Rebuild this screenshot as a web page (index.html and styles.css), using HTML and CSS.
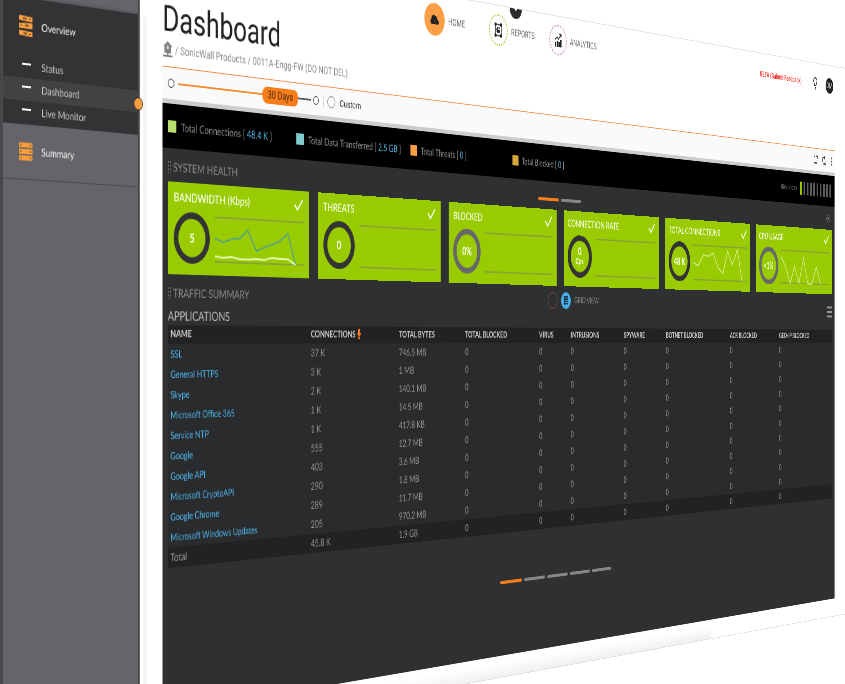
FILE: index.html
```html
<!DOCTYPE html>
<html lang="en">
<head>
<meta charset="utf-8">
<title>Dashboard</title>
<link rel="stylesheet" href="styles.css">
</head>
<body>
<div class="stage">
<div class="app">
  <aside class="sidebar">
    <nav class="side-group side-group-active">
      <a class="side-title" href="#overview">
        <svg class="stack" viewBox="0 0 18 21"><g fill="#fa9f3f"><path d="M1 0l16 1q1 0 1 1v3q0 1-1 1L1 5Q0 5 0 4V1q0-1 1-1z"/><path d="M1 8l16-1q1 0 1 1v4q0 1-1 1L1 13Q0 13 0 12V9q0-1 1-1z"/><path d="M1 15l16 1q1 0 1 1v3q0 1-1 1L1 20Q0 20 0 19v-3q0-1 1-1z"/></g><path d="M5 3h5M8 10h5M6 18h5" stroke="#5d4222" stroke-width="1.500"/><path d="M13 3h3M2 10h2M13 18.500h3" stroke="#5d4222"/></svg>
        Overview
      </a>
      <a class="side-item" href="#status">Status</a>
      <a class="side-item side-item-current" href="#dashboard">Dashboard</a>
      <a class="side-item" href="#monitor">Live Monitor</a>
    </nav>
    <nav class="side-group side-group-summary">
      <a class="side-title" href="#summary">
        <svg class="stack" viewBox="0 0 18 18"><g fill="#fa9f3f"><rect width="18" height="5" rx="1"/><rect y="6.500" width="18" height="5" rx="1"/><rect y="13" width="18" height="5" rx="1"/></g><path d="M1.500 2.500h2M1.500 9h2M1.500 15.500h2M14 2.500h2.500M14 9h2.500M14 15.500h2.500" stroke="#5d4222"/></svg>
        Summary
      </a>
    </nav>
    <button class="handle" aria-label="Collapse menu"></button>
  </aside>

  <main class="main">
    <header class="topbar">
      <nav class="tabs">
        <a class="tab" href="#home"><span class="tab-icon tab-home"><svg viewBox="0 0 20 16" width="20" height="16"><path d="M4 14a4 4 0 0 1 0-7 4 4 0 0 1 7-3 3 3 0 0 1 4 3l2 2a3 3 0 0 1 0 5z" fill="#222"/><path d="M9 9l4 4" stroke="#8a5a28"/></svg></span>HOME</a>
        <a class="tab" href="#reports"><span class="tab-icon tab-reports"><svg viewBox="0 0 20 20" width="20" height="20"><path d="M4 3h12v14H4z" fill="none" stroke="#222" stroke-width="1.500"/><path d="M2 1h4v4H2zM14 1h4v4h-4zM2 15h4v4H2zM14 15h4v4h-4z" fill="#222"/><circle cx="10" cy="10" r="4" fill="#222"/><path d="M10 10V7A3 3 0 0 1 13 10z" fill="#fff"/></svg></span>REPORTS</a>
        <a class="tab" href="#analytics"><span class="tab-icon tab-analytics"><svg viewBox="0 0 20 20" width="20" height="20"><path d="M3 19v-6h3v6zM7 19v-8h3v8zM11 19v-7h3v7zM15 19V9h3v10z" fill="#222"/><path d="M3 10l5-4 3 3 6-7M13 2h4v4" fill="none" stroke="#222" stroke-width="1.500"/></svg></span>ANALYTICS</a>
      </nav>
      <div class="account">
        <a class="beta" href="#feedback">BETA (Submit Feedback)</a>
        <svg viewBox="0 0 12 20" width="12" height="20" fill="none" stroke="#333" stroke-width="2"><path d="M4 13c0-3-3-3-3-7a5 5 0 0 1 10 0c0 4-3 4-3 7zM4 16h4M5 18.500h2"/></svg>
        <button class="avatar">DM</button>
      </div>
    </header>

    <h1 class="title">Dashboard</h1>
    <nav class="crumbs">
      <svg viewBox="0 0 16 18" width="16" height="18"><path d="M8 0l7 6h-2v7H9v2h6v2H1v-2h6v-2H3V6H1z" fill="#808080"/><path d="M8 4v5M6 7h4" stroke="#fff"/></svg>
      <span>/</span><a href="#products">SonicWall Products</a><span>/</span><a href="#device">0011A-Engg-FW (DO NOT DEL)</a>
    </nav>

    <section class="toolbar">
      <button class="stop" aria-label="Start"></button>
      <span class="track track-on"></span>
      <button class="period">30 Days</button>
      <span class="track"></span>
      <button class="stop" aria-label="End"></button>
      <span class="divider"></span>
      <label class="custom"><input type="radio" name="period">Custom</label>
      <div class="tools">
        <svg viewBox="0 0 14 14" width="14" height="14" fill="none" stroke="#444" stroke-width="2"><path d="M6 2H2v10h9V8M8 1.500h5M12.500 1v4"/></svg>
        <svg viewBox="0 0 14 14" width="14" height="14" fill="none" stroke="#444" stroke-width="2"><path d="M2 9V4q0-2 2-2h5M7 0l2 2-2 2M12 5v5q0 2-2 2H5M7 10l-2 2 2 2"/></svg>
        <svg viewBox="0 0 4 14" width="4" height="14" fill="#555"><circle cx="2" cy="2" r="1.500"/><circle cx="2" cy="7" r="1.500"/><circle cx="2" cy="12" r="1.500"/></svg>
      </div>
    </section>

    <div class="panel">
      <section class="totals">
        <div class="total"><i class="swatch green"></i>Total Connections [ <b>48.4 K</b> ]</div>
        <div class="total"><i class="swatch teal"></i>Total Data Transferred [ <b>2.5 GB</b> ]</div>
        <div class="total"><i class="swatch orange"></i>Total Threats [ <b>0</b> ]</div>
        <div class="total"><i class="swatch gold"></i>Total Blocked [ <b>0</b> ]</div>
        <div class="risk">Risk Index <span class="risk-bars"><i class="on"></i><i></i><i></i><i></i><i></i><i></i><i></i><i></i><i></i><i></i></span></div>
      </section>

      <section class="head health-head">
        <h2><span class="grip"></span>SYSTEM HEALTH</h2>
        <div class="pages"><button class="current" aria-label="Page 1"></button><button aria-label="Page 2"></button></div>
        <button class="expand" aria-label="Expand"></button>
      </section>

      <section class="cards">
        <article class="card">
          <h3>BANDWIDTH (Kbps)</h3><svg class="check" viewBox="0 0 18 16"><path d="M2 8l5 6L16 2"/></svg>
          <div class="ring">5</div>
          <svg class="chart" viewBox="0 0 147 52" preserveAspectRatio="none"><path class="rule" d="M0 1h147M0 50h147"/><path class="under" d="M0 24L13 28L27 24L40 23L53 13L67 36L80 32L93 28L106 24L120 15L133 49"/><path class="dash" d="M0 24L13 28L27 24L40 23L53 13L67 36L80 32L93 28L106 24L120 15L133 49"/><path class="line bold" d="M0 44L13 45L27 44L40 46L53 46L67 45L80 46L93 43L106 44L120 44L133 50"/></svg>
        </article>
        <article class="card">
          <h3>THREATS</h3><svg class="check" viewBox="0 0 18 16"><path d="M2 8l5 6L16 2"/></svg>
          <div class="ring">0</div>
          <svg class="chart" viewBox="0 0 147 52" preserveAspectRatio="none"><path class="rule" d="M0 1h147M0 50h147"/></svg>
        </article>
        <article class="card">
          <h3>BLOCKED</h3><svg class="check" viewBox="0 0 18 16"><path d="M2 8l5 6L16 2"/></svg>
          <div class="ring muted">0%</div>
          <svg class="chart" viewBox="0 0 147 52" preserveAspectRatio="none"><path class="rule" d="M0 1h147M0 50h147"/></svg>
        </article>
        <article class="card">
          <h3>CONNECTION RATE</h3><svg class="check" viewBox="0 0 18 16"><path d="M2 8l5 6L16 2"/></svg>
          <div class="ring">0<small>Cps</small></div>
          <svg class="chart" viewBox="0 0 147 52" preserveAspectRatio="none"><path class="rule" d="M0 1h147M0 50h147"/></svg>
        </article>
        <article class="card">
          <h3>TOTAL CONNECTIONS</h3><svg class="check" viewBox="0 0 18 16"><path d="M2 8l5 6L16 2"/></svg>
          <div class="ring">48 K</div>
          <svg class="chart" viewBox="0 0 147 52" preserveAspectRatio="none"><path class="rule" d="M0 1h147M0 50h147"/><path class="line" d="M0 26L13 30L27 14L40 16L53 11L67 32L80 40L93 7L106 27L120 4L133 50"/></svg>
        </article>
        <article class="card">
          <h3>CPU USAGE</h3><svg class="check" viewBox="0 0 18 16"><path d="M2 8l5 6L16 2"/></svg>
          <div class="ring muted">&lt;1%</div>
          <svg class="chart" viewBox="0 0 147 52" preserveAspectRatio="none"><path class="rule" d="M0 1h147M0 50h147"/><path class="line" d="M0 11L13 25L27 50L40 24L53 50L67 11L80 50L93 50L106 24L120 50"/></svg>
        </article>
      </section>

      <section class="head traffic-head">
        <h2><span class="grip"></span>TRAFFIC SUMMARY</h2>
        <div class="views">
          <button class="view" aria-label="Chart view"></button>
          <button class="view view-current" aria-label="Grid view"><svg viewBox="0 0 14 14" width="14" height="14" fill="none" stroke="#143448" stroke-width="2"><path d="M2 2h10M2 5h10M2 8h10M2 11h10M4 1v12"/></svg></button>
          <span>GRID VIEW</span>
        </div>
        <button class="menu" aria-label="Menu"><i></i><i></i><i></i></button>
      </section>

      <h4 class="caption">APPLICATIONS</h4>
      <table class="grid">
        <colgroup><col class="c-name"><col class="c-conn"><col class="c-bytes"><col class="c-blocked"><col class="c-virus"><col class="c-intr"><col class="c-spy"><col class="c-bot"><col class="c-acr"><col></colgroup>
        <thead><tr><th>NAME</th><th>CONNECTIONS <svg viewBox="0 0 8 12" width="8" height="12"><path d="M2 0h4v5h2L4 10 0 5h2zM2 10h4v2H2z" fill="#f47b20"/></svg></th><th>TOTAL BYTES</th><th>TOTAL BLOCKED</th><th>VIRUS</th><th>INTRUSIONS</th><th>SPYWARE</th><th>BOTNET BLOCKED</th><th>ACR BLOCKED</th><th>GEO-IP BLOCKED</th></tr></thead>
        <tbody>
          <tr><td><a href="#a1">SSL</a></td><td>37 K</td><td>746.5 MB</td><td>0</td><td>0</td><td>0</td><td>0</td><td>0</td><td>0</td><td>0</td></tr>
          <tr><td><a href="#a2">General HTTPS</a></td><td>3 K</td><td>1 MB</td><td>0</td><td>0</td><td>0</td><td>0</td><td>0</td><td>0</td><td>0</td></tr>
          <tr><td><a href="#a3">Skype</a></td><td>2 K</td><td>140.1 MB</td><td>0</td><td>0</td><td>0</td><td>0</td><td>0</td><td>0</td><td>0</td></tr>
          <tr><td><a href="#a4">Microsoft Office 365</a></td><td>1 K</td><td>14.5 MB</td><td>0</td><td>0</td><td>0</td><td>0</td><td>0</td><td>0</td><td>0</td></tr>
          <tr><td><a href="#a5">Service NTP</a></td><td>1 K</td><td>417.8 KB</td><td>0</td><td>0</td><td>0</td><td>0</td><td>0</td><td>0</td><td>0</td></tr>
          <tr><td><a href="#a6">Google</a></td><td>555</td><td>12.7 MB</td><td>0</td><td>0</td><td>0</td><td>0</td><td>0</td><td>0</td><td>0</td></tr>
          <tr><td><a href="#a7">Google API</a></td><td>403</td><td>3.6 MB</td><td>0</td><td>0</td><td>0</td><td>0</td><td>0</td><td>0</td><td>0</td></tr>
          <tr><td><a href="#a8">Microsoft CryptoAPI</a></td><td>290</td><td>1.8 MB</td><td>0</td><td>0</td><td>0</td><td>0</td><td>0</td><td>0</td><td>0</td></tr>
          <tr><td><a href="#a9">Google Chrome</a></td><td>289</td><td>11.7 MB</td><td>0</td><td>0</td><td>0</td><td>0</td><td>0</td><td>0</td><td>0</td></tr>
          <tr><td><a href="#a10">Microsoft Windows Updates</a></td><td>205</td><td>970.2 MB</td><td>0</td><td>0</td><td>0</td><td>0</td><td>0</td><td>0</td><td>0</td></tr>
        </tbody>
        <tfoot><tr><td>Total</td><td>45.8 K</td><td>1.9 GB</td><td>0</td><td>0</td><td>0</td><td>0</td><td>0</td><td>0</td><td>0</td></tr></tfoot>
      </table>
      <div class="pages table-pages"><button class="current" aria-label="Page 1"></button><button aria-label="Page 2"></button><button aria-label="Page 3"></button><button aria-label="Page 4"></button><button aria-label="Page 5"></button></div>
    </div>
  </main>
  <button class="notch" aria-label="Show header"></button>
</div>
</div>
</body>
</html>
```
FILE: styles.css
```css
* { box-sizing: border-box; }
body { margin: 0; background: #fff; font-family: Roboto, "Liberation Sans", sans-serif; font-size: 12px; color: #333; text-rendering: geometricPrecision; }
a { color: inherit; text-decoration: none; }
button { padding: 0; border: 0; background: none; font: inherit; color: inherit; }
h1, h2, h3, h4 { margin: 0; font-weight: 400; }
svg { display: block; flex: none; }

/* The whole application is one plane, turned away from the viewer about its left edge. */
.stage { height: 100vh; overflow: hidden; perspective: 1960px; perspective-origin: 0 340px; }
.app { position: relative; display: flex; width: calc(200vw + 38px); margin-top: -85px; transform: rotateY(40deg); transform-origin: 0 0; background: #fff; box-shadow: 0 0 0 1px #dedede; }

/* Sidebar */
.sidebar { position: relative; flex: none; width: 194px; padding-top: 79px; background: #656569; border: solid #48484a; border-width: 0 3px 0 4px; font-family: Lato, Roboto, sans-serif; font-size: 11px; }
.side-group-active { height: 128px; padding-top: 14px; background: #333335; box-shadow: 0 -2px 2px #57575b; color: #f4f4f4; }
.side-group-summary { height: 56px; padding-top: 13px; border-bottom: 1px solid #4b4b4d; color: #f4f4f4; }
.side-title { display: flex; align-items: center; gap: 12px; height: 28px; padding-left: 21px; }
.stack { width: 18px; height: 21px; }
.side-item { display: flex; align-items: center; gap: 14px; height: 23px; padding-left: 25px; color: #c4c4c4; }
.side-item::before { content: ""; width: 12px; height: 2px; margin-top: -6px; background: #fff; }
.side-title + .side-item { margin-top: 16px; }
.side-item-current { background: #424244; }
.handle { position: absolute; top: 167px; right: -8px; width: 14px; height: 14px; border: 1px solid #222; border-radius: 50%; background: #fa9f3f; }

/* Main column */
.main { flex: 1; min-width: 0; padding: 10px 33px 27px 34px; background: linear-gradient(#f5f5f5, #f5f5f5) 5px 80px / 6px 100% no-repeat, linear-gradient(#fff, #f0f0f0) 0 100% / 1140px 18px no-repeat; }
.topbar { display: flex; align-items: center; justify-content: space-between; height: 41px; padding-left: 449px; }
.tabs { display: flex; gap: 30px; color: #666; }
.tab { display: flex; align-items: center; gap: 7px; min-width: 100px; }
.tab-icon { display: grid; place-items: center; width: 40px; height: 40px; border-radius: 50%; }
.tab-home { background: #fa9f45; }
.tab-reports { border: 2px dotted #a9d03f; }
.tab-analytics { border: 2px dotted #c78fc0; }
.account { display: flex; align-items: center; gap: 36px; }
.beta { color: #f2251d; font-size: 11px; font-weight: 500; }
.avatar { width: 24px; height: 24px; margin: 0 4px 0 -10px; border-radius: 50%; background: #222; color: #ddd; font-size: 12px; }
.notch { position: absolute; top: 0; left: 50%; width: 26px; height: 13px; margin-left: -13px; border-radius: 0 0 13px 13px; background: #2c2c2e; }
.notch::after { content: ""; display: block; width: 0; margin: -8px auto 0; border: 4px solid transparent; border-top-color: #fff; }

.title { height: 51px; padding-top: 9px; color: #232323; font-size: 39px; line-height: 39px; }
.crumbs { display: flex; align-items: center; gap: 3px; height: 28px; padding-bottom: 8px; color: #8b8b8b; font-size: 12px; line-height: 14px; }

.toolbar { display: flex; align-items: center; height: 40px; padding: 0 8px; background: #fafafa; border-top: 1px solid #f68a42; border-bottom: 5px solid #cdcdcd; font-size: 11px; }
.stop { width: 10px; height: 10px; border: 1px solid #333; border-radius: 50%; background: #fff; }
.track { width: 22px; height: 2px; background: #555; }
.track + .stop { margin-left: 4px; }
.track-on { width: 134px; margin-left: 6px; background: #f58a2e; }
.period { width: 60px; height: 19px; border-radius: 8px; background: #f77d1b; color: #4c2e12; font-size: 12px; }
.divider { width: 1px; height: 14px; margin: 0 7px; background: #999; }
.custom { display: flex; align-items: center; gap: 8px; }
.custom input { appearance: none; width: 14px; height: 14px; margin: 0; border: 1px solid #777; border-radius: 50%; background: #fff; }
.tools { display: flex; gap: 13px; margin-left: auto; }

/* Dark panel */
.panel { background: #2f3032; padding-bottom: 91px; color: #9a9a9a; font-family: Lato, Roboto, sans-serif; }
.totals { display: flex; align-items: center; height: 48px; padding: 0 11px 0 8px; background: #000; font-size: 12px; }
.total { display: flex; align-items: center; width: 207px; white-space: pre; color: #929292; }
.total b { color: #5cbcf0; font-weight: 400; }
.swatch { width: 13px; height: 13px; margin-right: 7px; }
.green { background: #b8df70; }
.teal { background: #7fcdcd; }
.orange { background: #fa9f45; }
.gold { background: #d6a83a; }
.risk { display: flex; align-items: center; gap: 9px; margin-left: auto; font-size: 11px; }
.risk-bars { display: flex; gap: 5px; }
.risk-bars i { width: 5px; height: 20px; background: #5e5e5e; }
.risk-bars .on { background: #9c0; }

.head { display: grid; grid-template-columns: 1fr auto 1fr; align-items: center; padding: 0 8px; }
.head > :last-child { justify-self: end; }
.head h2 { display: flex; align-items: center; gap: 3px; font-size: 13px; line-height: 16px; color: #8c8c8c; }
.grip { width: 5px; height: 14px; background: radial-gradient(#999 1px, transparent 1px) 0 0 / 3px 4px; }
.health-head { height: 36px; padding-top: 10px; }
.health-head h2 { margin-top: -6px; }
.traffic-head { height: 34px; padding-top: 5px; }
.pages { display: flex; gap: 5px; }
.pages button { width: 46px; height: 4px; border-radius: 2px; background: #858585; }
.pages .current { background: #f77d1b; }
.expand { width: 12px; height: 12px; margin: -8px 6px 0 0; border: 1px solid #777; border-radius: 50%; }
.expand::after { content: ""; display: block; width: 4px; height: 4px; margin: 0 auto; background: #777; }
.traffic-head h2 { margin-top: -2px; }
.views { display: flex; align-items: center; gap: 8px; margin-top: -4px; padding-left: 62px; font-size: 11px; line-height: 14px; color: #888; }
.view { display: grid; place-items: center; width: 22px; height: 22px; border: 1px solid #8c4f2b; border-radius: 50%; }
.view-current { border: 0; background: #45aee8; }
.menu { display: grid; gap: 4px; padding-top: 14px; }
.menu i { width: 15px; height: 3px; background: #999; }

/* Health cards */
.cards { display: grid; grid-template-columns: repeat(6, 1fr); gap: 16px; padding: 0 8px; color: #fff; }
.card { display: grid; grid-template-columns: 56px 1fr; grid-template-rows: 32px 56px; column-gap: 8px; height: 100px; padding: 0 9px; background: #98cc00; }
.card h3 { grid-area: 1 / 1 / 2 / 3; align-self: center; font-size: 13px; font-weight: 500; }
.check { grid-area: 1 / 2; justify-self: end; align-self: center; width: 18px; height: 16px; fill: none; stroke: #fff; stroke-width: 2; }
.ring { display: grid; place-content: center; justify-items: center; border: 7px solid #333335; border-radius: 50%; font-size: 14px; font-weight: 700; line-height: 14px; }
.ring small { font-size: 11px; line-height: 14px; }
.muted { border-color: #68686a; }
.chart { width: 100%; height: 52px; margin-top: 3px; fill: none; }
.rule { stroke: #7b7d6c; stroke-width: 1; }
.line { stroke: #d0eb88; stroke-width: 2; }
.bold { stroke: #e8f8b8; stroke-width: 2; }
.under { stroke: #6fb86a; stroke-width: 1; }
.dash { stroke: #4f9a98; stroke-width: 2; stroke-dasharray: 3 1; }

/* Applications table */
.caption { padding-left: 8px; color: #bdbdbd; font-size: 14px; line-height: 21px; }
.grid { width: calc(100% - 16px); margin: 0 8px; table-layout: fixed; border-collapse: collapse; background: #2a2b2d; font-size: 12px; line-height: 14px; }
.grid th, .grid td { height: 22px; padding: 0 4px; text-align: left; white-space: nowrap; }
.grid th { height: 20px; background: #222224; color: #cfcfcf; font-size: 11px; font-weight: 700; }
.grid th svg { display: inline-block; vertical-align: -2px; }
.grid a { color: #4db6ee; font-size: 11px; }
.grid tfoot { background: #222224; }
.c-name { width: 228px; }
.c-conn { width: 160px; }
.c-bytes { width: 130px; }
.c-blocked { width: 157px; }
.c-virus { width: 71px; }
.c-intr { width: 125px; }
.c-spy { width: 105px; }
.c-bot { width: 170px; }
.c-acr { width: 140px; }
.table-pages { justify-content: center; margin-top: 61px; padding-right: 12px; }
```
